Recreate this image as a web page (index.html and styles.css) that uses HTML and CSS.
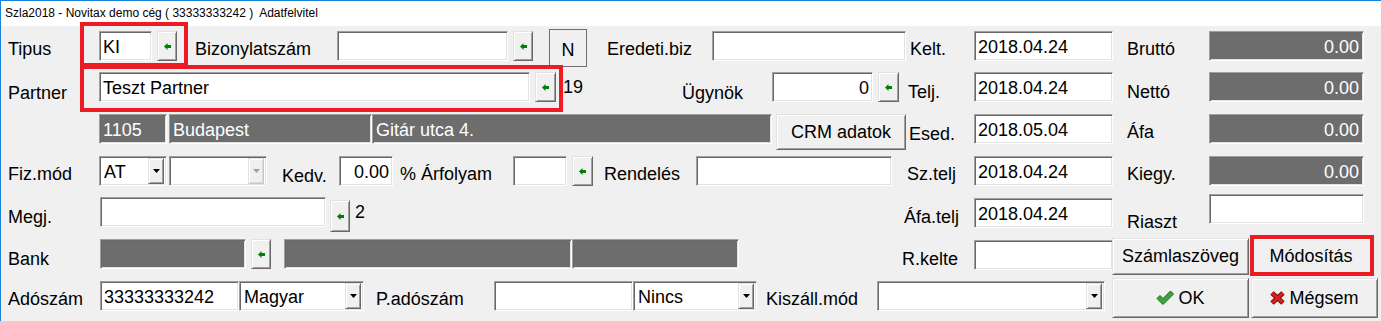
FILE: index.html
```html
<!DOCTYPE html>
<html lang="hu">
<head>
<meta charset="utf-8">
<title>Szla2018 - Adatfelvitel</title>
<link rel="stylesheet" href="styles.css">
</head>
<body>
<div class="window">
  <div class="titlebar">Szla2018 - Novitax demo cég ( 33333333242 )&nbsp; Adatfelvitel</div>
  <div class="form">
    <!-- row 1 -->
    <div class="row">
      <div class="lbl w91">Tipus</div>
      <div class="field w53">KI</div>
      <div class="pick ml5 w20"><svg class="arr" width="7" height="7" viewBox="0 0 7 7"><path d="M0 3.5 L3.5 0 V2 H7 V5 H3.5 V7 Z"/></svg></div>
      <div class="lbl ml18 w142">Bizonylatszám</div>
      <div class="field w171"></div>
      <div class="pick ml5 w20"><svg class="arr" width="7" height="7" viewBox="0 0 7 7"><path d="M0 3.5 L3.5 0 V2 H7 V5 H3.5 V7 Z"/></svg></div>
      <div class="nbtn ml16">N</div>
      <div class="lbl ml20 w105">Eredeti.biz</div>
      <div class="field w194"></div>
      <div class="lbl ml4 w64">Kelt.</div>
      <div class="field w139">2018.04.24</div>
      <div class="lbl ml14 w82">Bruttó</div>
      <div class="ro right w155">0.00</div>
    </div>
    <!-- row 2 -->
    <div class="row up1">
      <div class="lbl w91 low">Partner</div>
      <div class="field w431">Teszt Partner</div>
      <div class="pick ml5 w21"><svg class="arr" width="7" height="7" viewBox="0 0 7 7"><path d="M0 3.5 L3.5 0 V2 H7 V5 H3.5 V7 Z"/></svg></div>
      <div class="lbl ml7 w119 plain">19</div>
      <div class="lbl w90 low">Ügynök</div>
      <div class="field right w101">0</div>
      <div class="pick ml5 w21"><svg class="arr" width="7" height="7" viewBox="0 0 7 7"><path d="M0 3.5 L3.5 0 V2 H7 V5 H3.5 V7 Z"/></svg></div>
      <div class="lbl ml9 w66 mid">Telj.</div>
      <div class="field w139">2018.04.24</div>
      <div class="lbl ml14 w82 mid">Nettó</div>
      <div class="ro right w155">0.00</div>
    </div>
    <!-- row 3 -->
    <div class="row">
      <div class="ro ml91 w68">1105</div>
      <div class="ro ml2 w203">Budapest</div>
      <div class="ro w400">Gitár utca 4.</div>
      <div class="btn ml4 w130 h36">CRM adatok</div>
      <div class="lbl ml3 w65 mid">Esed.</div>
      <div class="field w139">2018.05.04</div>
      <div class="lbl ml14 w82">Áfa</div>
      <div class="ro right w155">0.00</div>
    </div>
    <!-- row 4 -->
    <div class="row">
      <div class="lbl w91">Fiz.mód</div>
      <div class="combo w68"><span class="ctext">AT</span><span class="drop"><svg width="7" height="4" viewBox="0 0 7 4"><path d="M0 0 H7 L3.5 4 Z"/></svg></span></div>
      <div class="combo disabled ml2 w98"><span class="ctext"></span><span class="drop"><svg width="7" height="4" viewBox="0 0 7 4"><path d="M0 0 H7 L3.5 4 Z"/></svg></span></div>
      <div class="lbl ml15 w57 mid">Kedv.</div>
      <div class="field right w54">0.00</div>
      <div class="lbl ml7 w113">% Árfolyam</div>
      <div class="field w54"></div>
      <div class="pick ml5 w21"><svg class="arr" width="7" height="7" viewBox="0 0 7 7"><path d="M0 3.5 L3.5 0 V2 H7 V5 H3.5 V7 Z"/></svg></div>
      <div class="lbl ml11 w92">Rendelés</div>
      <div class="field w196"></div>
      <div class="lbl ml15 w67">Sz.telj</div>
      <div class="field w139">2018.04.24</div>
      <div class="lbl ml14 w82">Kiegy.</div>
      <div class="ro right w155">0.00</div>
    </div>
    <!-- row 5 -->
    <div class="row up1">
      <div class="lbl w92 mid">Megj.</div>
      <div class="field w226"></div>
      <div class="pick ml4 w20 drop3"><svg class="arr" width="7" height="7" viewBox="0 0 7 7"><path d="M0 3.5 L3.5 0 V2 H7 V5 H3.5 V7 Z"/></svg></div>
      <div class="lbl ml5 w549 plain">2</div>
      <div class="lbl w70 mid">Áfa.telj</div>
      <div class="field w139 down1">2018.04.24</div>
      <div class="lbl ml14 w82 lower">Riaszt</div>
      <div class="field w155 up3"></div>
    </div>
    <!-- row 6 -->
    <div class="row">
      <div class="lbl w92 mid">Bank</div>
      <div class="ro w146"></div>
      <div class="pick ml5 w20"><svg class="arr" width="7" height="7" viewBox="0 0 7 7"><path d="M0 3.5 L3.5 0 V2 H7 V5 H3.5 V7 Z"/></svg></div>
      <div class="ro ml13 w288"></div>
      <div class="ro w167"></div>
      <div class="lbl ml163 w72 mid">R.kelte</div>
      <div class="field w139 down1"></div>
      <div class="btn mln1 w137 h37 up1">Számlaszöveg</div>
      <div class="btn ml1 w122 h37 up1">Módosítás</div>
    </div>
    <!-- row 7 -->
    <div class="row">
      <div class="lbl w92">Adószám</div>
      <div class="field w139">33333333242</div>
      <div class="combo w125"><span class="ctext">Magyar</span><span class="drop"><svg width="7" height="4" viewBox="0 0 7 4"><path d="M0 0 H7 L3.5 4 Z"/></svg></span></div>
      <div class="lbl ml12 w118">P.adószám</div>
      <div class="field w139"></div>
      <div class="combo w124"><span class="ctext">Nincs</span><span class="drop"><svg width="7" height="4" viewBox="0 0 7 4"><path d="M0 0 H7 L3.5 4 Z"/></svg></span></div>
      <div class="lbl ml9 w111">Kiszáll.mód</div>
      <div class="combo w228"><span class="ctext"></span><span class="drop"><svg width="7" height="4" viewBox="0 0 7 4"><path d="M0 0 H7 L3.5 4 Z"/></svg></span></div>
      <div class="btn ml7 w137 h40 up3">
        <svg class="ico" width="18" height="16" viewBox="0 0 18 16"><path class="chk" d="M1 8.5 L4 5.5 L7 8.5 L14.5 1 L17.5 4 L7 14.5 Z"/></svg>
        <span>OK</span>
      </div>
      <div class="btn ml2 w127 h40 up3">
        <svg class="ico" width="15" height="14" viewBox="0 0 15 14"><path class="xo" d="M2 2 L13 12 M13 2 L2 12"/><path class="xi" d="M2 2 L13 12 M13 2 L2 12"/></svg>
        <span>Mégsem</span>
      </div>
    </div>
  </div>
  <div class="mark mark-tipus"></div>
  <div class="mark mark-partner"></div>
  <div class="mark mark-mod"></div>
</div>
</body>
</html>
```

FILE: styles.css
```css
* { box-sizing: border-box; }
html, body { margin: 0; padding: 0; }
body {
  width: 1381px;
  height: 321px;
  overflow: hidden;
  background: #f0f0f0;
  font-family: "Liberation Sans", Arial, sans-serif;
  color: #000;
}
.window {
  position: relative;
  width: 1381px;
  height: 321px;
  border-left: 1px solid #1883d7;
  border-top: 1px solid #1883d7;
  background: #f0f0f0;
}
.titlebar {
  height: 25px;
  background: #fff;
  font-size: 12px;
  line-height: 25px;
  padding-left: 4px;
  white-space: pre;
}
.form {
  display: flex;
  flex-direction: column;
  gap: 12px;
  padding: 5px 0 0 7px;
  font-size: 18px;
}
.row {
  display: flex;
  align-items: flex-start;
  height: 30px;
  flex: none;
}
.row > * { flex: none; }
.up1 { margin-top: -1px; }
.up3 { margin-top: -3px; }
.down1 { margin-top: 1px; }
.drop3 { margin-top: 3px; height: 32px !important; }

.lbl {
  line-height: 30px;
  padding-top: 3px;
  white-space: nowrap;
}
.lbl.plain { padding-top: 0; }
.lbl.mid { padding-top: 5px; }
.lbl.low { padding-top: 6px; }
.lbl.lower { padding-top: 10px; }

.field, .ro, .combo {
  height: 30px;
  border: 1px solid;
  border-color: #a0a0a0 #ffffff #ffffff #a0a0a0;
  box-shadow: inset 1px 1px 0 #696969, inset -1px -1px 0 #e3e3e3;
  padding: 2px 3px 0 3px;
  line-height: 26px;
  white-space: nowrap;
  overflow: hidden;
}
.field { background: #fff; }
.ro { background: #6d6d6d; color: #fff; }
.right { text-align: right; }
.ro.right { padding-right: 4px; }

.combo {
  background: #fff;
  display: flex;
  padding: 2px 2px 2px 4px;
}
.ctext { flex: 1; line-height: 26px; }
.combo .drop {
  flex: none;
  width: 16px;
  height: 26px;
  margin-top: -1px;
  background: #f0f0f0;
  border: 1px solid;
  border-color: #e3e3e3 #696969 #696969 #e3e3e3;
  box-shadow: inset 1px 1px 0 #fff, inset -1px -1px 0 #a0a0a0;
  display: flex;
  align-items: center;
  justify-content: center;
}
.combo .drop svg { fill: #000; }
.combo.disabled .drop {
  border-color: #e3e3e3 #c8c8c8 #c8c8c8 #e3e3e3;
  box-shadow: inset 1px 1px 0 #fff, inset -1px -1px 0 #dadada;
}
.combo.disabled .drop svg { fill: #a0a0a0; }

.pick, .btn {
  background: #f0f0f0;
  border: 1px solid;
  border-color: #e3e3e3 #696969 #696969 #e3e3e3;
  box-shadow: inset 1px 1px 0 #fff, inset -1px -1px 0 #a0a0a0;
  display: flex;
  align-items: center;
  justify-content: center;
}
.pick { height: 30px; }
.arr { fill: #008000; }
.btn {
  height: 30px;
  white-space: nowrap;
  gap: 4px;
}
.h36 { height: 36px; }
.h37 { height: 37px; }
.h40 { height: 40px; }
.ico { flex: none; }
.chk { fill: #39a839; stroke: #1d5e1d; stroke-width: 1; stroke-linejoin: round; }
.xo { stroke: #7a0c0c; stroke-width: 5; fill: none; }
.xi { stroke: #dc2020; stroke-width: 3; fill: none; }

.nbtn {
  width: 38px;
  height: 38px;
  margin-top: -2px;
  border: 1px solid #6f6f6f;
  background: #f0f0f0;
  text-align: center;
  line-height: 36px;
  padding-top: 2px;
}

.mark {
  position: absolute;
  border: 4px solid #ec1c24;
  pointer-events: none;
}
.mark-tipus { left: 79px; top: 21px; width: 108px; height: 45px; }
.mark-partner { left: 79px; top: 64px; width: 483px; height: 47px; }
.mark-mod { left: 1249px; top: 234px; width: 124px; height: 41px; }

/* widths */
.w20 { width: 20px; } .w21 { width: 21px; } .w53 { width: 53px; } .w54 { width: 54px; }
.w57 { width: 57px; } .w64 { width: 64px; } .w65 { width: 65px; } .w66 { width: 66px; }
.w67 { width: 67px; } .w68 { width: 68px; } .w70 { width: 70px; } .w72 { width: 72px; }
.w82 { width: 82px; } .w90 { width: 90px; } .w91 { width: 91px; } .w92 { width: 92px; }
.w98 { width: 98px; } .w101 { width: 101px; } .w105 { width: 105px; } .w111 { width: 111px; }
.w113 { width: 113px; } .w118 { width: 118px; } .w119 { width: 119px; } .w122 { width: 122px; }
.w124 { width: 124px; } .w125 { width: 125px; } .w127 { width: 127px; } .w130 { width: 130px; }
.w137 { width: 137px; } .w139 { width: 139px; } .w142 { width: 142px; } .w146 { width: 146px; }
.w155 { width: 155px; } .w167 { width: 167px; } .w171 { width: 171px; } .w194 { width: 194px; }
.w196 { width: 196px; } .w203 { width: 203px; } .w226 { width: 226px; } .w228 { width: 228px; }
.w288 { width: 288px; } .w400 { width: 400px; } .w431 { width: 431px; } .w549 { width: 549px; }

/* left spacing */
.ml1 { margin-left: 1px; } .ml2 { margin-left: 2px; } .ml3 { margin-left: 3px; }
.ml4 { margin-left: 4px; } .ml5 { margin-left: 5px; } .ml7 { margin-left: 7px; }
.ml9 { margin-left: 9px; } .ml11 { margin-left: 11px; } .ml12 { margin-left: 12px; }
.ml13 { margin-left: 13px; } .ml14 { margin-left: 14px; } .ml15 { margin-left: 15px; }
.ml16 { margin-left: 16px; } .ml18 { margin-left: 18px; } .ml20 { margin-left: 20px; }
.ml91 { margin-left: 91px; } .ml163 { margin-left: 163px; } .mln1 { margin-left: -1px; }
```
